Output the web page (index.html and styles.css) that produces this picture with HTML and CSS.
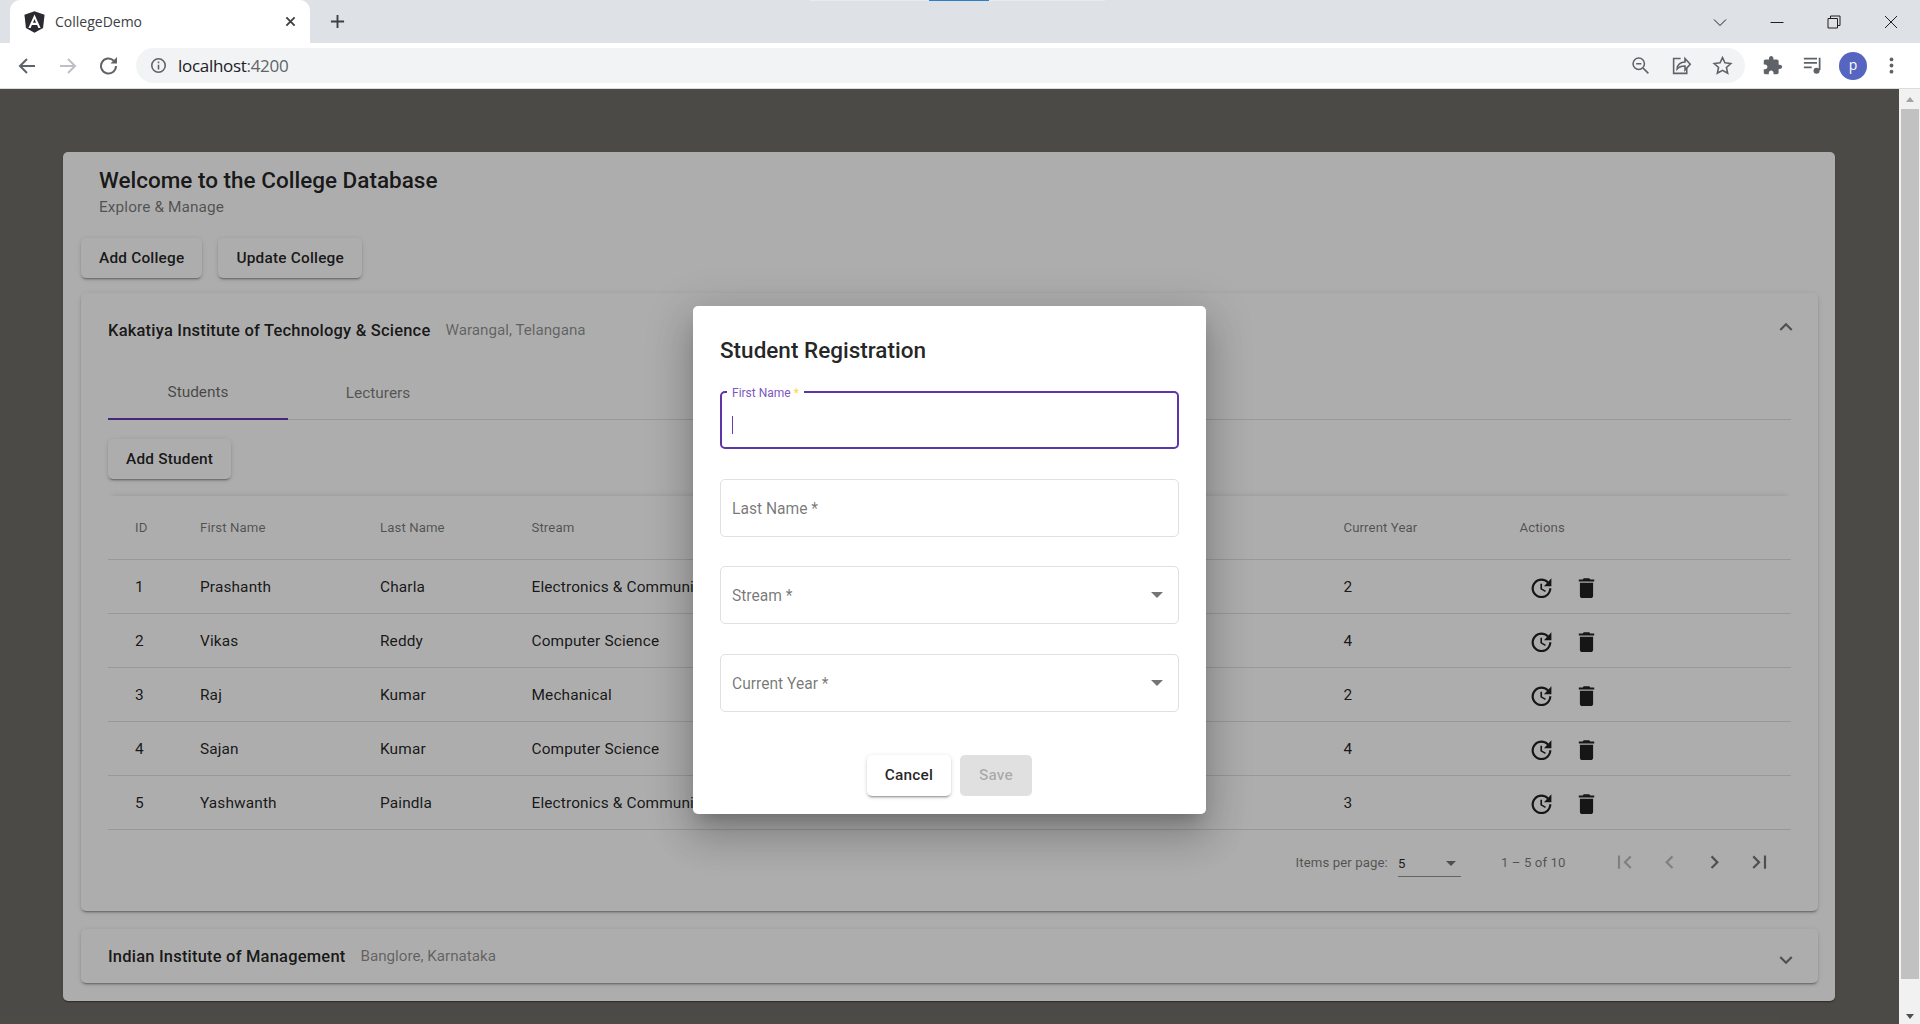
FILE: index.html
```html
<!DOCTYPE html>
<html lang="en">
<head>
<meta charset="utf-8">
<title>CollegeDemo</title>
<link rel="stylesheet" href="styles.css">
</head>
<body>
<header class="browser">
  <div class="tabstrip">
    <div class="tab">
      <svg class="favicon" viewBox="16 8 218 234"><path fill="#2a2a30" d="M125 10L18 48l16 142 91 50 91-50 16-142z"/><path fill="#fff" d="M125 46L60 190h24l13-32h56l13 32h24zM141 132h-32l16-38z"/></svg>
      <span class="tab-title">CollegeDemo</span>
      <svg class="tab-close" viewBox="0 0 12 12"><path d="M1.500 1.500l9 9M10.500 1.500l-9 9"/></svg>
    </div>
    <svg class="newtab" viewBox="0 0 16 16"><path d="M8 1v14M1 8h14"/></svg>
    <div class="strip-gap"></div>
    <div class="winctl">
      <svg viewBox="0 0 14 14"><path d="M1 4.500l6 6 6-6"/></svg>
      <svg viewBox="0 0 14 14"><path d="M0.500 7.500h13"/></svg>
      <svg viewBox="0 0 14 14"><path d="M1 3.500h9.500V13H1zM3.500 3.500V1H13v9.500h-2.500"/></svg>
      <svg viewBox="0 0 14 14"><path d="M1 1l12 12M13 1L1 13"/></svg>
    </div>
    <div class="title-glow"><i class="title-blue"></i></div>
  </div>
  <div class="toolbar">
    <svg class="nav" viewBox="0 0 24 24"><path d="M20 12H5M12 5l-7 7 7 7"/></svg>
    <svg class="nav nav-off" viewBox="0 0 24 24"><path d="M4 12h15M12 5l7 7-7 7"/></svg>
    <svg class="nav" viewBox="0 0 24 24"><path d="M19 12a7.500 7.500 0 1 1-2.200-5.300"/><path class="solid" d="M20 3v6.500h-6.500z"/></svg>
    <div class="urlbar">
      <svg class="info" viewBox="0 0 24 24"><circle cx="12" cy="12" r="8.500"/><path d="M12 11v6M12 7v2"/></svg>
      <span class="url"><span class="url-host">localhost</span>:4200</span>
      <span class="url-gap"></span>
      <svg class="url-icon" viewBox="0 0 24 24"><circle cx="10" cy="10" r="6.500"/><path d="M15 15l6 6M7 10h6"/></svg>
      <svg class="url-icon" viewBox="0 0 24 24"><path d="M11 4H3v17h15v-6"/><path d="M7 16c0-5 4-8 9-8V4l6 6.500-6 6.500v-4.500c-4 0-7 1-9 3.500z"/></svg>
      <svg class="url-icon" viewBox="0 0 24 24"><path d="M12 3l2.800 6 6.700.8-5 4.500 1.400 6.600L12 17.500 6.100 20.900l1.400-6.600-5-4.500 6.700-.8z"/></svg>
    </div>
    <svg class="ext" viewBox="0 0 24 24"><path d="M20.500 11H19V7c0-1.100-.9-2-2-2h-4V3.500C13 2.120 11.880 1 10.500 1S8 2.120 8 3.500V5H4c-1.100 0-1.990.9-1.990 2v3.800H3.500c1.490 0 2.700 1.210 2.700 2.700s-1.210 2.700-2.700 2.700H2V20c0 1.100.9 2 2 2h3.800v-1.500c0-1.490 1.210-2.700 2.700-2.700 1.490 0 2.700 1.210 2.700 2.700V22H17c1.100 0 2-.9 2-2v-4h1.500c1.380 0 2.500-1.120 2.500-2.500S21.880 11 20.500 11z"/></svg>
    <svg class="ext ext-media" viewBox="0 0 24 24"><path class="line" d="M1 4h15M1 9h15M1 14h9M19 3v14"/><circle cx="15.500" cy="18" r="3.500"/></svg>
    <span class="avatar">p</span>
    <svg class="ext ext-menu" viewBox="0 0 24 24"><circle cx="12" cy="5" r="2.200"/><circle cx="12" cy="12" r="2.200"/><circle cx="12" cy="19" r="2.200"/></svg>
  </div>
</header>

<div class="viewport">
  <main class="page">
    <section class="card">
      <div class="card-head">
        <h1 class="card-title">Welcome to the College Database</h1>
        <p class="card-sub">Explore &amp; Manage</p>
      </div>
      <div class="card-actions">
        <button class="btn raised">Add College</button>
        <button class="btn raised">Update College</button>
      </div>

      <article class="panel">
        <div class="panel-head">
          <span class="panel-title">Kakatiya Institute of Technology &amp; Science</span>
          <span class="panel-desc">Warangal, Telangana</span>
          <svg class="chevron chevron-up" viewBox="0 0 24 24"><path d="M7.410 15.410L12 10.830l4.590 4.580L18 14l-6-6-6 6z"/></svg>
        </div>
        <div class="panel-body">
          <div class="tabs">
            <div class="mtab mtab-active">Students</div>
            <div class="mtab">Lecturers</div>
          </div>
          <button class="btn raised add-student">Add Student</button>
          <div class="table">
            <div class="row row-head"><span>ID</span><span>First Name</span><span>Last Name</span><span>Stream</span><span>Current Year</span><span>Actions</span></div>
            <div class="row"><span>1</span><span>Prashanth</span><span>Charla</span><span>Electronics &amp; Communication</span><span>2</span>
              <span class="row-actions"><svg class="icon-btn" viewBox="0 0 24 24"><path d="M21 10.120h-6.780l2.740-2.820c-2.730-2.700-7.150-2.800-9.880-.1-2.730 2.710-2.730 7.080 0 9.790s7.150 2.710 9.880 0C18.320 15.650 19 14.080 19 12.100h2c0 1.980-.88 4.550-2.640 6.290-3.510 3.480-9.210 3.480-12.720 0-3.500-3.470-3.530-9.110-.02-12.580s9.140-3.470 12.650 0L21 3v7.120zM12.500 8v4.250l3.500 2.080-.72 1.210L11 13V8h1.500z"/></svg><svg class="icon-btn" viewBox="0 0 24 24"><path d="M6 19c0 1.100.9 2 2 2h8c1.100 0 2-.9 2-2V7H6v12zM19 4h-3.500l-1-1h-5l-1 1H5v2h14V4z"/></svg></span></div>
            <div class="row"><span>2</span><span>Vikas</span><span>Reddy</span><span>Computer Science</span><span>4</span>
              <span class="row-actions"><svg class="icon-btn" viewBox="0 0 24 24"><path d="M21 10.120h-6.780l2.740-2.820c-2.730-2.700-7.150-2.800-9.880-.1-2.730 2.710-2.730 7.080 0 9.790s7.150 2.710 9.880 0C18.320 15.650 19 14.080 19 12.100h2c0 1.980-.88 4.550-2.640 6.290-3.510 3.480-9.210 3.480-12.720 0-3.500-3.470-3.530-9.110-.02-12.580s9.140-3.470 12.650 0L21 3v7.120zM12.500 8v4.250l3.500 2.080-.72 1.210L11 13V8h1.500z"/></svg><svg class="icon-btn" viewBox="0 0 24 24"><path d="M6 19c0 1.100.9 2 2 2h8c1.100 0 2-.9 2-2V7H6v12zM19 4h-3.500l-1-1h-5l-1 1H5v2h14V4z"/></svg></span></div>
            <div class="row"><span>3</span><span>Raj</span><span>Kumar</span><span>Mechanical</span><span>2</span>
              <span class="row-actions"><svg class="icon-btn" viewBox="0 0 24 24"><path d="M21 10.120h-6.780l2.740-2.820c-2.730-2.700-7.150-2.800-9.880-.1-2.730 2.710-2.730 7.080 0 9.790s7.150 2.710 9.880 0C18.320 15.650 19 14.080 19 12.100h2c0 1.980-.88 4.550-2.640 6.290-3.510 3.480-9.210 3.480-12.720 0-3.500-3.470-3.530-9.110-.02-12.580s9.140-3.470 12.650 0L21 3v7.120zM12.500 8v4.250l3.500 2.080-.72 1.210L11 13V8h1.500z"/></svg><svg class="icon-btn" viewBox="0 0 24 24"><path d="M6 19c0 1.100.9 2 2 2h8c1.100 0 2-.9 2-2V7H6v12zM19 4h-3.500l-1-1h-5l-1 1H5v2h14V4z"/></svg></span></div>
            <div class="row"><span>4</span><span>Sajan</span><span>Kumar</span><span>Computer Science</span><span>4</span>
              <span class="row-actions"><svg class="icon-btn" viewBox="0 0 24 24"><path d="M21 10.120h-6.780l2.740-2.820c-2.730-2.700-7.150-2.800-9.880-.1-2.730 2.710-2.730 7.080 0 9.790s7.150 2.710 9.880 0C18.320 15.650 19 14.080 19 12.100h2c0 1.980-.88 4.550-2.640 6.290-3.510 3.480-9.210 3.480-12.720 0-3.500-3.470-3.530-9.110-.02-12.580s9.140-3.470 12.650 0L21 3v7.120zM12.500 8v4.250l3.500 2.080-.72 1.210L11 13V8h1.500z"/></svg><svg class="icon-btn" viewBox="0 0 24 24"><path d="M6 19c0 1.100.9 2 2 2h8c1.100 0 2-.9 2-2V7H6v12zM19 4h-3.500l-1-1h-5l-1 1H5v2h14V4z"/></svg></span></div>
            <div class="row"><span>5</span><span>Yashwanth</span><span>Paindla</span><span>Electronics &amp; Communication</span><span>3</span>
              <span class="row-actions"><svg class="icon-btn" viewBox="0 0 24 24"><path d="M21 10.120h-6.780l2.740-2.820c-2.730-2.700-7.150-2.800-9.880-.1-2.730 2.710-2.730 7.080 0 9.790s7.150 2.710 9.880 0C18.320 15.650 19 14.080 19 12.100h2c0 1.980-.88 4.550-2.640 6.290-3.510 3.480-9.210 3.480-12.720 0-3.500-3.470-3.530-9.110-.02-12.580s9.140-3.470 12.650 0L21 3v7.120zM12.500 8v4.250l3.500 2.080-.72 1.210L11 13V8h1.500z"/></svg><svg class="icon-btn" viewBox="0 0 24 24"><path d="M6 19c0 1.100.9 2 2 2h8c1.100 0 2-.9 2-2V7H6v12zM19 4h-3.500l-1-1h-5l-1 1H5v2h14V4z"/></svg></span></div>
          </div>
          <div class="paginator">
            <span class="pg-label">Items per page:</span>
            <span class="pg-select"><span>5</span><i class="caret caret-small"></i></span>
            <span class="pg-range">1 – 5 of 10</span>
            <svg class="icon-btn pg-off" viewBox="0 0 24 24"><path d="M18.410 16.590L13.820 12l4.590-4.590L17 6l-6 6 6 6zM6 6h2v12H6z"/></svg>
            <svg class="icon-btn pg-off" viewBox="0 0 24 24"><path d="M15.410 7.410L14 6l-6 6 6 6 1.410-1.410L10.830 12z"/></svg>
            <svg class="icon-btn pg-on" viewBox="0 0 24 24"><path d="M10 6L8.590 7.410 13.170 12l-4.580 4.590L10 18l6-6z"/></svg>
            <svg class="icon-btn pg-on" viewBox="0 0 24 24"><path d="M5.590 7.410L10.180 12l-4.590 4.590L7 18l6-6-6-6zM16 6h2v12h-2z"/></svg>
          </div>
        </div>
      </article>

      <article class="panel panel-closed">
        <div class="panel-head">
          <span class="panel-title">Indian Institute of Management</span>
          <span class="panel-desc">Banglore, Karnataka</span>
          <svg class="chevron chevron-down" viewBox="0 0 24 24"><path d="M7.410 8.590L12 13.170l4.590-4.580L18 10l-6 6-6-6z"/></svg>
        </div>
      </article>
    </section>
  </main>

  <div class="scrollbar">
    <i class="sb-up"></i>
    <div class="sb-thumb"></div>
    <i class="sb-down"></i>
  </div>

  <div class="backdrop">
    <div class="dialog">
      <h2 class="dialog-title">Student Registration</h2>
      <div class="field field-focus">
        <label class="float-label">First Name <b>*</b></label>
        <span class="text-caret"></span>
      </div>
      <div class="field field-tight"><span class="ph">Last Name *</span></div>
      <div class="field"><span class="ph">Stream *</span><i class="caret"></i></div>
      <div class="field"><span class="ph">Current Year *</span><i class="caret"></i></div>
      <div class="dialog-actions">
        <button class="btn raised btn-cancel">Cancel</button>
        <button class="btn btn-save">Save</button>
      </div>
    </div>
  </div>
</div>
</body>
</html>
```

FILE: styles.css
```css
* { box-sizing: border-box; }
html, body { margin: 0; height: 1024px; overflow: hidden; }
body { font-family: Roboto, "Noto Sans", sans-serif; color: rgba(0,0,0,.87); background: #fff; }

/* browser chrome */
.browser { height: 89px; }
.tabstrip { position: relative; height: 43px; background: #dee1e6; display: flex; align-items: center; }
.title-glow { position: absolute; left: 810px; top: 0; width: 295px; height: 1px; background: #e9ebee; }
.title-blue { display: block; width: 60px; height: 1px; margin-left: 119px; background: #2f7fc7; }
.tab { width: 300px; height: 43px; margin-left: 10px; background: #fff; border-radius: 10px 10px 0 0; display: flex; align-items: center; padding-left: 14px; align-self: flex-end; }
.favicon { width: 21px; height: 22px; margin-right: 10px; }
.tab-title { font: 14px/20px "Open Sans", Roboto, sans-serif; color: #3c4043; width: 230px; }
.tab-close { width: 11px; height: 11px; fill: none; stroke: #3c4043; stroke-width: 2; }
.newtab { width: 15px; height: 15px; margin-left: 20px; fill: none; stroke: #3c4043; stroke-width: 2; }
.strip-gap { flex: 1; }
.winctl { display: flex; gap: 43px; padding-right: 22px; align-items: center; }
.winctl svg { width: 14px; height: 14px; fill: none; stroke: #1f1f1f; stroke-width: 1; }
.toolbar { height: 46px; background: #fff; border-bottom: 1px solid #dadce0; display: flex; align-items: center; padding-left: 15px; }
.nav { width: 24px; height: 24px; margin-right: 17px; fill: none; stroke: #5f6368; stroke-width: 2; flex: none; }
.nav .solid { fill: #5f6368; stroke: none; }
.nav-off { stroke: #bdc1c6; }
.urlbar { width: 1609px; height: 35px; margin-left: -2px; background: #f1f3f4; border-radius: 18px; display: flex; align-items: center; padding: 0 12px 0 13px; flex: none; }
.info { width: 19px; height: 19px; fill: none; stroke: #5f6368; stroke-width: 2; }
.url { margin-left: 10px; font: 17px/24px "Open Sans", Roboto, sans-serif; color: #5f6368; letter-spacing: -.3px; }
.url-host { color: #202124; }
.url-gap { flex: 1; }
.url-icon { width: 21px; height: 21px; margin-left: 20px; fill: none; stroke: #5f6368; stroke-width: 1.800; }
.ext { width: 21px; height: 21px; margin-left: 17px; fill: #5f6368; flex: none; }
.ext-media { margin-left: 20px; }
.ext-media .line { fill: none; stroke: #5f6368; stroke-width: 2; }
.avatar { width: 28px; height: 28px; margin-left: 15px; border-radius: 50%; background: #5565c0; color: #fff; font: 14px/26px "Open Sans", sans-serif; text-align: center; flex: none; }
.ext-menu { margin-left: 14px; }

/* viewport */
.viewport { position: relative; height: 935px; display: flex; background: #706e67; overflow: hidden; }
.page { width: 1899px; padding: 63px 64px 0 63px; flex: none; }
.scrollbar { flex: 1; background: #f1f1f1; display: flex; flex-direction: column; align-items: center; padding: 8px 1px 0; }
.sb-up { border: 4.500px solid transparent; border-top: 0; border-bottom: 5px solid #a3a3a3; width: 0; height: 0; }
.sb-thumb { width: 18px; height: 870px; margin-top: 7px; background: #c1c1c1; }
.sb-down { width: 0; height: 0; margin-top: 35px; border: 4.500px solid transparent; border-bottom: 0; border-top: 5px solid #505050; }

/* card */
.card { width: 1772px; height: 849px; background: #fff; border-radius: 5px; padding: 12px 17px 18px 18px; box-shadow: 0 2px 1px -1px rgba(0,0,0,.2), 0 1px 1px rgba(0,0,0,.14), 0 1px 3px rgba(0,0,0,.12); }
.card-head { padding-left: 18px; }
.card-title { margin: 0; font-size: 22.500px; line-height: 32px; font-weight: 465; }
.card-sub { margin: 1px 0 0; font-size: 15.400px; line-height: 20px; letter-spacing: .1px; color: rgba(0,0,0,.54); }
.card-actions { display: flex; gap: 16px; margin-top: 21px; }

/* buttons */
.btn { height: 40px; padding: 0 18px; border: 0; border-radius: 5px; background: #fff; font: 465 15.400px/38px Roboto, sans-serif; letter-spacing: .2px; color: rgba(0,0,0,.87); }
.raised { box-shadow: 0 3px 1px -2px rgba(0,0,0,.2), 0 2px 2px rgba(0,0,0,.14), 0 1px 5px rgba(0,0,0,.12); }

/* panels */
.panel { background: #fff; border-radius: 5px; margin-top: 15px; box-shadow: 0 3px 1px -2px rgba(0,0,0,.2), 0 2px 2px rgba(0,0,0,.14), 0 1px 5px rgba(0,0,0,.12); }
.panel-closed { margin-top: 18px; }
.panel-head { height: 74px; display: flex; align-items: center; padding: 0 19px 0 27px; }
.panel-closed .panel-head { height: 54px; }
.panel-title { font-size: 16.500px; font-weight: 465; letter-spacing: .2px; }
.panel-desc { margin-left: 15px; font-size: 15.200px; color: rgba(0,0,0,.45); }
.chevron { width: 26px; height: 26px; margin-left: auto; fill: rgba(0,0,0,.54); }
.chevron-up { margin-top: -7px; }
.chevron-down { margin-top: 7px; }
.panel-body { padding: 0 27px 16px; }

.tabs { display: flex; height: 53px; border-bottom: 1px solid rgba(0,0,0,.12); }
.mtab { width: 180px; height: 53px; display: flex; align-items: center; justify-content: center; padding-bottom: 2px; font-size: 15.400px; font-weight: 450; color: rgba(0,0,0,.87); opacity: .6; }
.mtab-active { border-bottom: 2px solid #673ab7; opacity: 1; color: rgba(0,0,0,.6); }
.add-student { margin-top: 19px; display: block; }

/* table */
.table { margin-top: 17px; box-shadow: 0 -5px 5px -4px rgba(0,0,0,.1); }
.row { height: 54px; display: grid; grid-template-columns: 65px 180px 151.500px 812px 176px 1fr; align-items: center; padding-left: 27px; border-bottom: 1px solid rgba(0,0,0,.12); font-size: 15.400px; letter-spacing: .14px; white-space: nowrap; }
.row-head { height: 64px; font-size: 13.200px; font-weight: 450; letter-spacing: .1px; color: rgba(0,0,0,.54); }
.row-actions { display: flex; margin-left: -1px; margin-top: 3px; }
.icon-btn { width: 45px; height: 26.400px; fill: rgba(0,0,0,.87); flex: none; }

/* paginator */
.paginator { height: 65px; display: flex; align-items: center; justify-content: flex-end; padding-right: 9.500px; font-size: 13.200px; letter-spacing: .1px; color: rgba(0,0,0,.54); }
.pg-label { margin-right: 10px; }
.pg-select { width: 63px; height: 26px; display: flex; align-items: center; justify-content: space-between; padding: 0 5px 0 0; border-bottom: 1px solid rgba(0,0,0,.42); color: rgba(0,0,0,.87); font-size: 13.200px; margin-top: 2px; }
.pg-range { margin: 0 36px 0 40px; }
.pg-off { fill: rgba(0,0,0,.26); }
.pg-on { fill: rgba(0,0,0,.54); }

.caret { width: 0; height: 0; border: 6px solid transparent; border-bottom: 0; border-top: 6px solid rgba(0,0,0,.54); }
.caret-small { border-width: 5.500px 5.500px 0; }

/* dialog */
.backdrop { position: absolute; left: 0; top: 0; width: 1899px; height: 935px; padding-top: 7px; background: rgba(0,0,0,.32); display: flex; align-items: center; justify-content: center; }
.dialog { width: 513px; height: 508px; padding: 26px 27px 18px; background: #fff; border-radius: 5px; display: flex; flex-direction: column; box-shadow: 0 11px 15px -7px rgba(0,0,0,.2), 0 24px 38px 3px rgba(0,0,0,.14), 0 9px 46px 8px rgba(0,0,0,.12); }
.dialog-title { margin: 0 0 23px; font-size: 22.500px; line-height: 36px; font-weight: 465; }
.field { position: relative; height: 58px; margin-bottom: 30px; padding-left: 11px; border: 1px solid #e0e0e0; border-radius: 5px; display: flex; align-items: center; justify-content: space-between; padding-right: 15px; flex: none; }
.field-tight { margin-bottom: 29px; }
.field-focus { border: 2px solid #5e35a8; padding-left: 10px; }
.float-label { position: absolute; left: 5px; top: -8px; padding: 0 5px; background: #fff; font-size: 12px; line-height: 16px; color: #7e57c2; opacity: 1; }
.float-label b { color: #ffd740; font-weight: 400; }
.text-caret { width: 1px; height: 18px; margin-top: 9px; background: #673ab7; }
.ph { font-size: 15.600px; margin-top: 2px; color: rgba(0,0,0,.54); }
.dialog-actions { display: flex; justify-content: center; gap: 9px; margin-top: 13px; }
.btn-cancel { width: 84px; height: 41px; padding: 0 0 2px; }
.btn-save { width: 72px; height: 41px; padding: 0 0 2px; background: #e0e0e0; color: rgba(0,0,0,.26); }
```
